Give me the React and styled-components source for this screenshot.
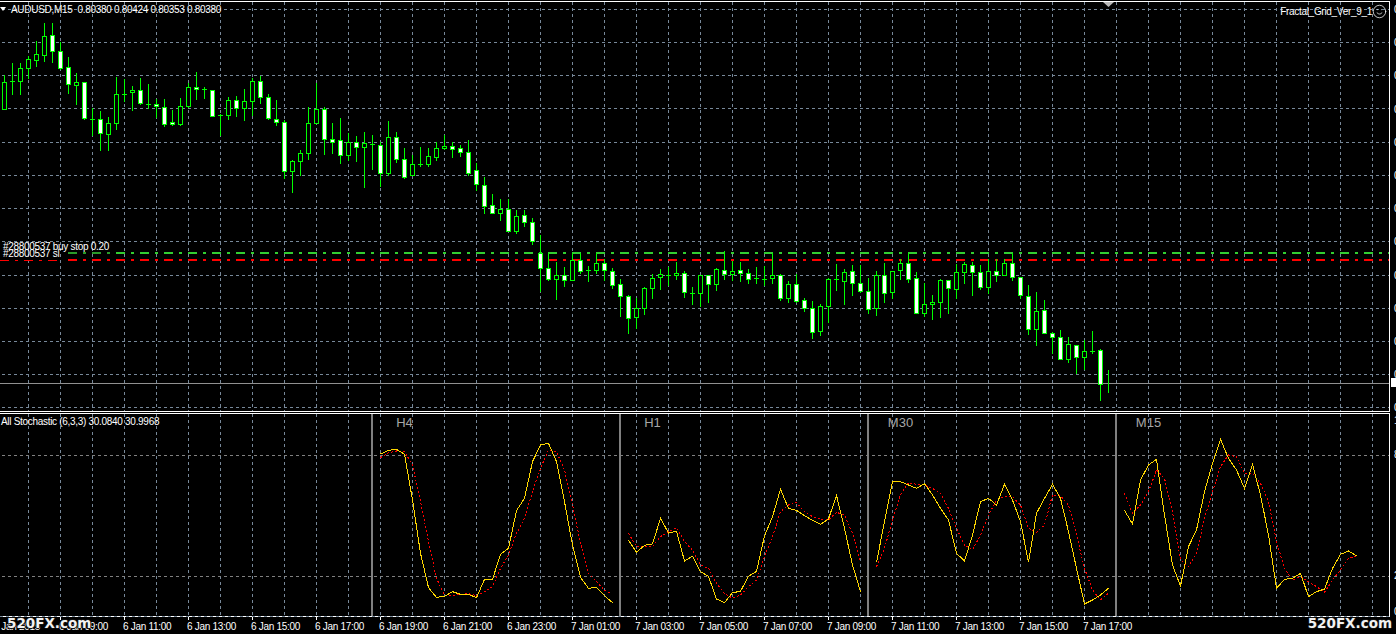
import styled, { createGlobalStyle } from "styled-components";
import { Smile } from "lucide-react";

const GlobalStyle = createGlobalStyle`
  html, body {
    margin: 0;
    background: #000;
    overflow: hidden;
  }
`;

const Terminal = styled.div`
  width: 1396px;
  height: 634px;
  padding-top: 1px;
  box-sizing: border-box;
  display: flex;
  flex-direction: column;
  background: #000;
  color: #fff;
  font-family: "Liberation Sans", Arial, sans-serif;
  font-size: 10px;
  letter-spacing: -0.3px;
  overflow: hidden;
`;

const Pane = styled.section`
  position: relative;
  display: flex;
  flex: none;
  height: ${(p) => p.$h}px;
  margin-bottom: ${(p) => p.$gap || 0}px;
`;

const Plot = styled.div`
  position: relative;
  flex: none;
  width: 1389px;
  border: 1px solid #fff;
  border-left: none;
  svg.plot-art {
    display: block;
    overflow: visible;
  }
`;

const Scale = styled.div`
  flex: none;
  width: 6px;
  padding: ${(p) => p.$top}px 0 0 4px;
  box-sizing: border-box;
  overflow: hidden;
  line-height: 12px;
`;

const ScaleRow = styled.div`
  height: ${(p) => p.$h}px;
  white-space: nowrap;
`;

const PriceTag = styled.div`
  position: absolute;
  right: 0;
  top: 377px;
  width: 5px;
  height: 9px;
  background: #fff;
`;

const TitleRow = styled.div`
  position: absolute;
  left: 0;
  top: 0;
  display: flex;
  align-items: center;
  gap: 5px;
  height: 14px;
  white-space: pre;
`;

const MenuArrow = styled.span`
  width: 0;
  height: 0;
  border-left: 3.5px solid transparent;
  border-right: 3.5px solid transparent;
  border-top: 4px solid #fff;
`;

const ExpertBadge = styled.div`
  position: absolute;
  right: 2px;
  top: 1px;
  display: flex;
  align-items: center;
  height: 16px;
`;

const OrderTags = styled.div`
  position: absolute;
  left: 3px;
  top: 241px;
  line-height: 7px;
  white-space: pre;
`;

const IndicatorName = styled.div`
  position: absolute;
  left: 1px;
  top: 2px;
  line-height: 12px;
`;

const PeriodStrip = styled.div`
  position: absolute;
  left: 372px;
  top: 1px;
  display: grid;
  grid-template-columns: repeat(4, 248px);
`;

const PeriodTag = styled.div`
  width: 65px;
  text-align: center;
  font-size: 13px;
  letter-spacing: 0;
  line-height: 15px;
  color: #a6a6a6;
`;

const TimeAxis = styled.footer`
  position: relative;
  display: grid;
  grid-template-columns: 59px repeat(17, 64px);
  padding-top: 4px;
  line-height: 12px;
`;

const FirstTime = styled.span`
  justify-self: end;
  margin-right: 19px;
  white-space: nowrap;
`;

const TimeLabel = styled.span`
  position: relative;
  white-space: nowrap;
  &::before {
    content: "";
    position: absolute;
    left: 1px;
    top: -4px;
    width: 1px;
    height: 3px;
    background: #fff;
  }
`;

const Watermark = styled.div`
  position: absolute;
  ${(p) => (p.$right ? "right: 4px;" : "left: 7px;")}
  top: -1px;
  font-family: "DejaVu Sans", sans-serif;
  font-weight: 700;
  font-size: 13.5px;
  letter-spacing: 0;
  line-height: 15px;
  color: #f2f2f2;
  white-space: nowrap;
  text-shadow: 1px 0 0 #111, -1px 0 0 #111, 0 1px 0 #111, 0 -1px 0 #111;
`;

// [type, high, bodyTop, bodyBottom, low]  b = white body, h = hollow, d = doji
const CANDLES = [
  ["h", 75, 82, 109, 109], ["d", 63, 81, 81, 94], ["h", 63, 68, 81, 94], ["h", 56, 59, 68, 78],
  ["h", 41, 54, 60, 66], ["h", 23, 36, 55, 61], ["b", 23, 35, 51, 62], ["b", 42, 51, 68, 69],
  ["b", 57, 67, 84, 93], ["h", 73, 82, 85, 104], ["b", 82, 82, 118, 119], ["d", 108, 119, 119, 135],
  ["b", 111, 119, 133, 150], ["h", 117, 123, 134, 150], ["h", 77, 94, 123, 129], ["d", 79, 94, 94, 101],
  ["h", 86, 90, 92, 110], ["b", 78, 90, 103, 104], ["d", 84, 104, 104, 108], ["b", 99, 104, 106, 117],
  ["b", 99, 107, 124, 126], ["b", 110, 122, 124, 125], ["h", 98, 106, 124, 125], ["h", 83, 87, 106, 107],
  ["b", 72, 87, 89, 99], ["d", 87, 89, 89, 98], ["b", 90, 90, 116, 116], ["d", 114, 115, 115, 135],
  ["h", 97, 100, 115, 119], ["b", 96, 100, 108, 116], ["h", 89, 101, 108, 120], ["h", 78, 81, 101, 115],
  ["b", 76, 81, 97, 103], ["b", 94, 97, 118, 119], ["b", 100, 119, 122, 125], ["b", 120, 122, 171, 178],
  ["h", 160, 161, 171, 192], ["h", 150, 153, 161, 175], ["h", 107, 123, 153, 159], ["h", 83, 109, 123, 123],
  ["b", 107, 109, 139, 154], ["b", 123, 139, 142, 153], ["b", 118, 140, 155, 163], ["h", 133, 142, 155, 160],
  ["b", 136, 142, 147, 161], ["h", 132, 143, 147, 187], ["d", 135, 144, 144, 169], ["b", 142, 145, 173, 186],
  ["h", 121, 137, 173, 175], ["b", 132, 137, 159, 162], ["b", 148, 159, 177, 178], ["h", 155, 164, 175, 175],
  ["d", 147, 164, 164, 166], ["h", 148, 156, 164, 166], ["h", 142, 148, 157, 160], ["h", 135, 146, 148, 149],
  ["b", 142, 146, 149, 157], ["b", 145, 148, 152, 156], ["b", 140, 152, 173, 175], ["b", 163, 170, 184, 190],
  ["b", 177, 185, 206, 213], ["b", 194, 205, 213, 213], ["h", 199, 209, 213, 220], ["b", 199, 209, 231, 231],
  ["h", 210, 216, 231, 233], ["b", 210, 215, 222, 226], ["b", 218, 222, 241, 244], ["b", 235, 253, 268, 291],
  ["b", 253, 268, 279, 280], ["h", 262, 275, 279, 299], ["b", 267, 275, 280, 286], ["h", 253, 260, 280, 280],
  ["b", 253, 260, 271, 273], ["d", 266, 270, 270, 281], ["h", 253, 263, 270, 273], ["b", 259, 263, 270, 280],
  ["b", 268, 271, 285, 288], ["b", 279, 284, 296, 316], ["b", 295, 296, 318, 333], ["h", 298, 308, 317, 328],
  ["h", 287, 288, 308, 314], ["h", 274, 278, 288, 298], ["h", 269, 274, 277, 289], ["d", 267, 275, 275, 285],
  ["h", 262, 273, 275, 279], ["b", 271, 273, 292, 297], ["d", 287, 293, 293, 304], ["h", 275, 275, 293, 306],
  ["b", 275, 275, 284, 302], ["h", 268, 269, 284, 290], ["b", 251, 270, 274, 279], ["h", 261, 271, 274, 280],
  ["b", 262, 270, 273, 281], ["b", 269, 273, 279, 283], ["d", 267, 278, 278, 283], ["d", 266, 279, 279, 285],
  ["h", 253, 275, 278, 283], ["b", 274, 275, 298, 300], ["h", 281, 284, 298, 302], ["b", 274, 284, 301, 302],
  ["b", 298, 300, 308, 311], ["b", 301, 308, 332, 338], ["h", 304, 306, 331, 335], ["h", 278, 279, 306, 322],
  ["d", 264, 279, 279, 290], ["h", 269, 272, 281, 304], ["b", 265, 271, 283, 295], ["b", 265, 283, 291, 292],
  ["b", 278, 291, 309, 313], ["h", 271, 275, 308, 315], ["b", 263, 275, 293, 302], ["h", 271, 271, 292, 298],
  ["h", 259, 263, 270, 279], ["b", 253, 263, 279, 282], ["b", 272, 278, 313, 313], ["h", 283, 304, 313, 316],
  ["h", 295, 302, 304, 319], ["h", 279, 280, 302, 317], ["b", 280, 280, 288, 313], ["h", 264, 272, 289, 298],
  ["h", 262, 264, 272, 283], ["b", 262, 265, 272, 295], ["b", 265, 272, 287, 289], ["h", 259, 271, 287, 293],
  ["b", 259, 271, 275, 281], ["h", 259, 263, 275, 275], ["b", 253, 263, 277, 280], ["b", 277, 277, 295, 298],
  ["b", 285, 296, 329, 334], ["h", 292, 311, 329, 345], ["b", 300, 310, 333, 333], ["b", 332, 333, 337, 353],
  ["b", 330, 337, 359, 359], ["h", 337, 344, 359, 362], ["b", 345, 345, 357, 373], ["h", 340, 351, 357, 369],
  ["d", 331, 351, 351, 353], ["b", 349, 350, 384, 400], ["w", 370, 383, 383, 392],
];

// stochastic readings in 1/3 px below y=405, one per bar
const STOCH = [
  {
    x: 380,
    main: [147, 136, 133, 148, 285, 445, 548, 577, 574, 560, 568, 568, 578, 523, 523, 448, 430, 317, 280, 170, 120, 115, 170, 290, 420, 517, 550, 547, 572, 593],
    signal: [158, 143, 138, 140, 180, 290, 410, 520, 570, 572, 568, 566, 572, 560, 545, 490, 450, 385, 340, 260, 190, 135, 140, 195, 300, 415, 505, 530, 555, 568],
  },
  {
    x: 628,
    main: [406, 442, 421, 417, 340, 384, 379, 468, 454, 500, 514, 582, 593, 563, 559, 514, 499, 393, 335, 253, 310, 316, 332, 346, 358, 342, 271, 370, 480, 560],
    signal: [385, 425, 425, 425, 395, 380, 368, 410, 435, 480, 490, 535, 565, 580, 570, 545, 525, 455, 395, 320, 300, 293, 320, 335, 342, 345, 322, 330, 385, 470],
  },
  {
    x: 876,
    main: [472, 350, 230, 230, 240, 250, 236, 270, 310, 345, 445, 468, 390, 290, 280, 300, 238, 285, 350, 472, 325, 280, 238, 280, 380, 490, 597, 585, 570, 550],
    signal: [485, 430, 345, 270, 233, 238, 240, 250, 265, 310, 370, 420, 435, 390, 330, 285, 275, 275, 300, 370, 382, 360, 270, 272, 300, 390, 490, 555, 585, 565],
  },
  {
    x: 1124,
    main: [316, 357, 225, 180, 163, 330, 480, 543, 425, 375, 260, 175, 103, 160, 195, 250, 178, 270, 390, 550, 523, 520, 505, 575, 560, 552, 490, 448, 438, 452],
    signal: [265, 325, 300, 260, 195, 220, 320, 465, 485, 445, 340, 260, 185, 150, 155, 205, 205, 235, 290, 410, 490, 525, 515, 530, 545, 562, 525, 495, 460, 452],
  },
];

const GRID_X = Array.from({ length: 43 }, (_, i) => 28 + i * 32);
const GRID_Y = [9, 42, 75, 108, 142, 175, 208, 241, 275, 308, 341, 374, 407];
const PERIOD_X = [371, 619, 867, 1115];
const TIMES = [
  "6 Jan 09:00", "6 Jan 11:00", "6 Jan 13:00", "6 Jan 15:00", "6 Jan 17:00", "6 Jan 19:00",
  "6 Jan 21:00", "6 Jan 23:00", "7 Jan 01:00", "7 Jan 03:00", "7 Jan 05:00", "7 Jan 07:00",
  "7 Jan 09:00", "7 Jan 11:00", "7 Jan 13:00", "7 Jan 15:00", "7 Jan 17:00",
];

const GRID = "#778899";
const LIME = "#00ff00";
const DASH = "3 3";
const ORDER_DASH = "9 6 3 6";

function Candle({ bar, index }) {
  const [kind, high, top, bottom, low] = bar;
  const x = 4 + index * 8;
  return (
    <g>
      <line x1={x + 0.5} x2={x + 0.5} y1={high} y2={low + 1} stroke={LIME} />
      {kind === "d" && <line x1={x - 2} x2={x + 3} y1={top + 0.5} y2={top + 0.5} stroke={LIME} />}
      {(kind === "b" || kind === "h") && (
        <rect
          x={x - 1.5}
          y={top + 0.5}
          width={4}
          height={bottom - top}
          fill={kind === "b" ? "#fff" : "#000"}
          stroke={LIME}
        />
      )}
    </g>
  );
}

function PriceArt() {
  return (
    <svg className="plot-art" width="1389" height="409" viewBox="0 2 1389 409" shapeRendering="crispEdges">
      {GRID_Y.map((y) => (
        <line key={y} x1="2" x2="1389" y1={y + 0.5} y2={y + 0.5} stroke={GRID} strokeDasharray={DASH} />
      ))}
      {GRID_X.map((x) => (
        <line key={x} x1={x + 0.5} x2={x + 0.5} y1="2" y2="411" stroke={GRID} strokeDasharray={DASH} />
      ))}
      <line x1="68" x2="112" y1="253" y2="253" stroke="#2a9a2a" strokeWidth="2" strokeDasharray={ORDER_DASH} />
      <line x1="116" x2="1389" y1="253" y2="253" stroke="#32cd32" strokeWidth="2" strokeDasharray={ORDER_DASH} />
      <line x1="0" x2="60" y1="260.5" y2="260.5" stroke="#ff0000" strokeDasharray={ORDER_DASH} />
      <line x1="68" x2="1389" y1="260" y2="260" stroke="#ff0000" strokeWidth="2" strokeDasharray={ORDER_DASH} />
      <line x1="0" x2="1389" y1="383.5" y2="383.5" stroke="#909090" />
      {CANDLES.map((bar, i) => (
        <Candle key={i} bar={bar} index={i} />
      ))}
      <polygon points="1103,2 1114,2 1108.5,7" fill="#b8b8b8" shapeRendering="auto" />
    </svg>
  );
}

const toPoints = (x, values) => values.map((v, i) => `${x + i * 8 + 0.5},${405 + v / 3}`).join(" ");

function StochasticArt() {
  return (
    <svg className="plot-art" width="1389" height="202" viewBox="0 414 1389 202" shapeRendering="crispEdges">
      {GRID_X.map((x) => (
        <line key={x} x1={x + 0.5} x2={x + 0.5} y1="414" y2="616" stroke={GRID} strokeDasharray={DASH} />
      ))}
      {[455, 576].map((y) => (
        <line key={y} x1="2" x2="1389" y1={y + 0.5} y2={y + 0.5} stroke="#808080" strokeDasharray={DASH} />
      ))}
      {PERIOD_X.map((x) => (
        <rect key={x} x={x} y="414" width="2" height="202" fill="#808080" />
      ))}
      {STOCH.map((s) => (
        <g key={s.x} fill="none">
          <polyline points={toPoints(s.x, s.signal)} stroke="#ff0000" strokeDasharray="2 2" />
          <polyline points={toPoints(s.x, s.main)} stroke="#ffd700" />
        </g>
      ))}
      <line x1="0" x2="1389" y1="616.5" y2="616.5" stroke={GRID} strokeDasharray={DASH} />
    </svg>
  );
}

export default function App() {
  return (
    <>
      <GlobalStyle />
      <Terminal>
        <Pane $h={411} $gap={1}>
          <Plot>
            <PriceArt />
            <TitleRow>
              <MenuArrow />
              AUDUSD,M15  0.80380 0.80424 0.80353 0.80380
            </TitleRow>
            <ExpertBadge>
              Fractal_Grid_Ver_9_1
              <Smile size={15} strokeWidth={1.2} />
            </ExpertBadge>
            <OrderTags>
              #28800537 buy stop 0.20
              <br />
              #28800537 sl
            </OrderTags>
          </Plot>
          <Scale $top={3}>
            {GRID_Y.map((y) => (
              <ScaleRow key={y} $h={33.2}>
                0.8
              </ScaleRow>
            ))}
          </Scale>
          <PriceTag />
        </Pane>
        <Pane $h={204}>
          <Plot>
            <StochasticArt />
            <IndicatorName>All Stochastic (6,3,3) 30.0840 30.9968</IndicatorName>
            <PeriodStrip>
              <PeriodTag>H4</PeriodTag>
              <PeriodTag>H1</PeriodTag>
              <PeriodTag>M30</PeriodTag>
              <PeriodTag>M15</PeriodTag>
            </PeriodStrip>
          </Plot>
          <Scale $top={2}>
            <ScaleRow $h={34}>100</ScaleRow>
            <ScaleRow $h={121}>80</ScaleRow>
            <ScaleRow $h={36}>20</ScaleRow>
            <ScaleRow $h={12}>0</ScaleRow>
          </Scale>
        </Pane>
        <TimeAxis>
          <FirstTime>6 Jan 2015</FirstTime>
          {TIMES.map((t) => (
            <TimeLabel key={t}>{t}</TimeLabel>
          ))}
          <Watermark>520FX.com</Watermark>
          <Watermark $right>520FX.com</Watermark>
        </TimeAxis>
      </Terminal>
    </>
  );
}
